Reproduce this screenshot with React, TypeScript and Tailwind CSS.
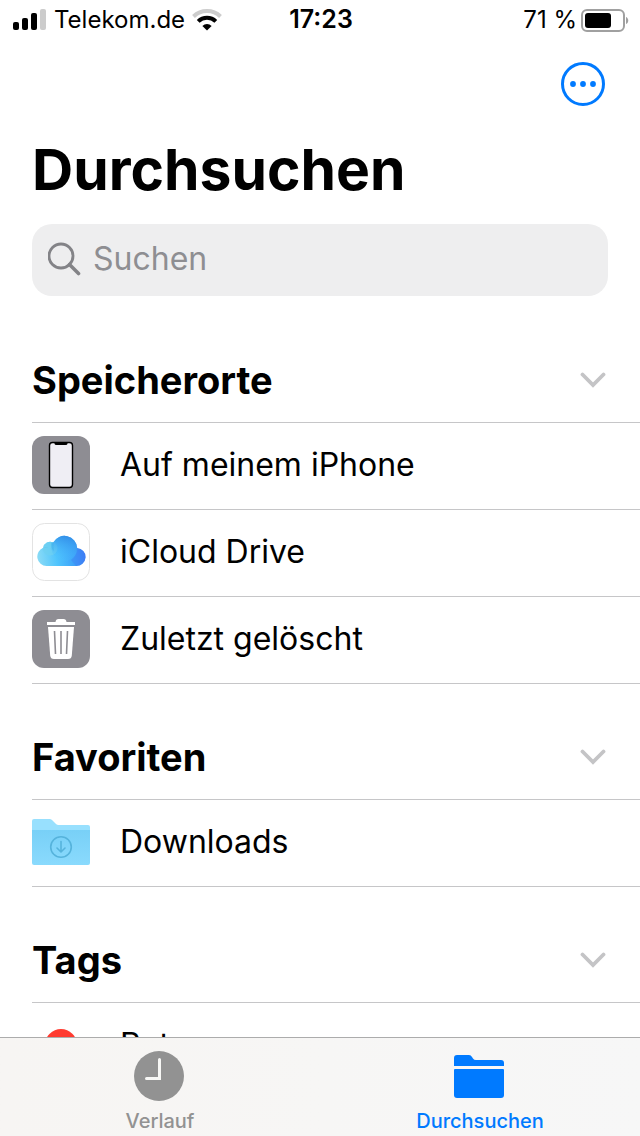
import { useState } from "react";
import type { ReactNode } from "react";

type Item = { label: string; icon: ReactNode };

function SignalIcon() {
  return (
    <svg width="34" height="22" viewBox="0 0 34 22" aria-hidden="true">
      <rect x="0" y="13" width="6" height="8" rx="2" />
      <rect x="9" y="9" width="6" height="12" rx="2" />
      <rect x="18" y="4" width="6" height="17" rx="2" />
      <rect x="27" y="0" width="6" height="21" rx="2" fill="#cccccc" />
    </svg>
  );
}

function WifiIcon() {
  return (
    <svg width="30" height="22" viewBox="0 0 30 22" fill="none" aria-hidden="true">
      <path d="M1.5 7.5a19.5 19.5 0 0 1 27 0" stroke="#cccccc" strokeWidth="4" />
      <path d="M6.2 12.4a12.6 12.6 0 0 1 17.6 0" stroke="#000" strokeWidth="4" />
      <path d="M15 21.5l-4.6-4.6a6.6 6.6 0 0 1 9.2 0z" fill="#000" />
    </svg>
  );
}

function BatteryIcon() {
  return (
    <svg width="48" height="23" viewBox="0 0 48 23" aria-hidden="true">
      <rect x="1" y="1" width="42" height="21" rx="5" fill="none" stroke="#a0a0a0" strokeWidth="2" />
      <rect x="4" y="4" width="26" height="15" rx="3" />
      <path d="M45 8c3 1 3 6 0 7z" fill="#a0a0a0" />
    </svg>
  );
}

function PhoneIcon() {
  return (
    <svg width="58" height="58" viewBox="0 0 58 58" aria-hidden="true">
      <rect width="58" height="58" rx="12" fill="#8e8d93" />
      <rect x="17.5" y="6.5" width="23" height="45" rx="3" fill="#efeef4" stroke="#000" strokeWidth="1.4" />
      <path d="M22.5 6h13v1.5q0 1.5-2 1.5h-9q-2 0-2-1.5z" />
    </svg>
  );
}

function CloudIcon() {
  return (
    <svg width="58" height="58" viewBox="0 0 58 58" aria-hidden="true">
      <defs>
        <linearGradient id="cloud" x1="0" y1="0.6" x2="1" y2="0.5">
          <stop offset="0" stopColor="#8ddcf5" />
          <stop offset="0.4" stopColor="#4fc4fd" />
          <stop offset="0.75" stopColor="#3ba0f8" />
          <stop offset="1" stopColor="#3f7cf5" />
        </linearGradient>
        <linearGradient id="puff" x1="0.6" y1="0" x2="0.4" y2="1">
          <stop offset="0" stopColor="#318be6" />
          <stop offset="0.9" stopColor="#4cc2ff" stopOpacity="0.2" />
        </linearGradient>
        <clipPath id="cloud-shape">
          <path d="M14.500 43a9.500 9.500 0 0 1-3.300-18.300a7 7 0 0 1 10-5.200a12.800 12.800 0 0 1 24 5.500a9 9 0 0 1-1.200 18z" />
        </clipPath>
      </defs>
      <rect x="0.5" y="0.5" width="57" height="57" rx="12" fill="#fff" stroke="#e3e3e3" />
      <g clipPath="url(#cloud-shape)">
        <rect x="4" y="10" width="50" height="34" fill="url(#cloud)" />
        <circle cx="18" cy="25" r="7.500" fill="#6fd0f0" opacity="0.7" />
        <circle cx="32.500" cy="24.700" r="13" fill="url(#puff)" />
        <path d="M11 25q7-2 11 3q-1-5 0-9l-3 1q0 5 2 7q-5-4-10-2z" fill="#3fb4ea" opacity="0.5" />
        <path d="M44 43a9 9 0 0 0 1-18.100q.4 8-6 12z" fill="#3f78f4" opacity="0.35" />
      </g>
    </svg>
  );
}

function TrashIcon() {
  return (
    <svg width="58" height="58" viewBox="0 0 58 58" aria-hidden="true">
      <rect width="58" height="58" rx="12" fill="#8e8d93" />
      <path d="M15 12h8.500q.3-3 3-3h5q2.700 0 3 3H43v3H15z" fill="#fff" />
      <path d="M16 17h26l-2.200 28.500q-.3 3.500-3.800 3.500H22q-3.500 0-3.800-3.500z" fill="#fff" />
      <path
        d="M22.500 21l1 23M29 21v23M35.500 21l-1 23"
        stroke="#8e8d93"
        strokeWidth="1.600"
        fill="none"
      />
    </svg>
  );
}

function DownloadsIcon() {
  return (
    <svg width="58" height="58" viewBox="0 0 58 58" aria-hidden="true">
      <defs>
        <linearGradient id="folder" x1="0" y1="0" x2="0" y2="1">
          <stop offset="0" stopColor="#78d0f7" />
          <stop offset="1" stopColor="#8adafd" />
        </linearGradient>
      </defs>
      <path d="M0 8q0-2 2-2h15.500q1.500 0 2.500 1l4 4q1 1 2.500 1H56q2 0 2 2v6H0z" fill="#98e0fe" />
      <path d="M0 17h58v33q0 2-2 2H2q-2 0-2-2z" fill="url(#folder)" />
      <g fill="none" stroke="#56b3dc" strokeWidth="1.600">
        <circle cx="29" cy="34" r="10.300" />
        <path d="M29 28.500v10M25 35l4 4l4-4" strokeLinecap="round" strokeLinejoin="round" />
      </g>
    </svg>
  );
}

function TagDot() {
  return <span className="size-8 rounded-full bg-[#ff3b30]" />;
}

function Section({ title, items }: { title: string; items: Item[] }) {
  const [open, setOpen] = useState(true);

  return (
    <section className="pl-8">
      <h2 className="border-b border-[#c6c6c8]">
        <button
          type="button"
          aria-expanded={open}
          onClick={() => setOpen(!open)}
          className="flex h-[115px] w-full items-end justify-between pr-[34px] pb-5 text-left"
        >
          <span className="text-[38px] leading-11 font-bold">{title}</span>
          <svg width="26" height="44" viewBox="0 0 26 44" fill="none" aria-hidden="true">
            <path d="M2.500 16.500l10.500 10.500l10.500-10.500" stroke="#c4c4c6" strokeWidth="3.800" strokeLinecap="round" />
          </svg>
        </button>
      </h2>
      {open && (
        <ul>
          {items.map((item) => (
            <li key={item.label} className="border-b border-[#c6c6c8]">
              <a href="#" className="flex h-[86px] items-center gap-[30px] pb-0.5">
                <span className="flex w-[58px] justify-center">{item.icon}</span>
                <span className="text-[32px] leading-10">{item.label}</span>
              </a>
            </li>
          ))}
        </ul>
      )}
    </section>
  );
}

export default function App() {
  return (
    <div className="flex h-screen flex-col bg-white font-['Inter','Liberation_Sans',sans-serif] text-black">
      <header className="grid h-10 shrink-0 grid-cols-[1fr_auto_1fr] items-center pr-[11px] pl-[13px] text-2xl">
        <div className="flex items-center gap-[7px]">
          <SignalIcon />
          <span>Telekom.de</span>
          <WifiIcon />
        </div>
        <span className="text-[25px] font-semibold">17:23</span>
        <div className="flex items-center justify-end gap-1">
          <span>71 %</span>
          <BatteryIcon />
        </div>
      </header>

      <main className="min-h-0 flex-1 overflow-hidden">
        <div className="flex h-[88px] items-center justify-end pr-[35px]">
          <button type="button" aria-label="Mehr">
            <svg width="44" height="44" viewBox="0 0 44 44" fill="#007aff" aria-hidden="true">
              <circle cx="22" cy="22" r="20.500" fill="none" stroke="#007aff" strokeWidth="3" />
              <circle cx="12" cy="22" r="2.900" />
              <circle cx="22" cy="22" r="2.900" />
              <circle cx="32" cy="22" r="2.900" />
            </svg>
          </button>
        </div>
        <h1 className="px-8 pt-0.5 pb-3.5 text-[57px] leading-20 font-bold">Durchsuchen</h1>
        <label className="mx-8 mb-[11px] flex h-18 items-center gap-3 rounded-[20px] bg-[#eeeeef] px-4 pb-0.5">
          <svg width="33" height="34" viewBox="0 0 33 34" fill="none" stroke="#838387" aria-hidden="true">
            <circle cx="13" cy="14" r="12" strokeWidth="2.800" />
            <path d="M21.500 22.500l9 9" strokeWidth="3.600" strokeLinecap="round" />
          </svg>
          <input
            type="search"
            aria-label="Suchen"
            placeholder="Suchen"
            className="min-w-0 flex-1 bg-transparent text-[32px] leading-10 outline-none placeholder:text-[#8e8e92]"
          />
        </label>

        <Section
          title="Speicherorte"
          items={[
            { label: "Auf meinem iPhone", icon: <PhoneIcon /> },
            { label: "iCloud Drive", icon: <CloudIcon /> },
            { label: "Zuletzt gelöscht", icon: <TrashIcon /> },
          ]}
        />
        <Section title="Favoriten" items={[{ label: "Downloads", icon: <DownloadsIcon /> }]} />
        <Section title="Tags" items={[{ label: "Rot", icon: <TagDot /> }]} />
      </main>

      <nav className="grid shrink-0 grid-cols-2 border-t border-[#acacac] bg-linear-to-r from-[#f7f5f3] to-[#f7f7f7] text-xl font-medium">
        <a href="#" className="flex flex-col items-center gap-[5px] pt-3 pb-px text-[#929292]">
          <svg width="52" height="52" viewBox="0 0 52 52" aria-hidden="true">
            <circle cx="25" cy="26" r="25" fill="#929292" />
            <path d="M25.500 9.500v19h-13" fill="none" stroke="#f7f7f5" strokeWidth="3" strokeLinecap="round" />
          </svg>
          <span>Verlauf</span>
        </a>
        <a href="#" aria-current="page" className="flex flex-col items-center gap-[5px] pt-3 pb-px text-[#007aff]">
          <svg width="52" height="52" viewBox="0 0 52 52" fill="#007aff" aria-hidden="true">
            <path d="M0 8q0-3 3-3h12q2 0 3 2l1 1.500q1 1.500 3 1.500h25q3 0 3 3v3H0z" />
            <path d="M0 20q0-1 1-1h48q1 0 1 1v25q0 3-3 3H3q-3 0-3-3z" />
          </svg>
          <span>Durchsuchen</span>
        </a>
      </nav>
    </div>
  );
}
